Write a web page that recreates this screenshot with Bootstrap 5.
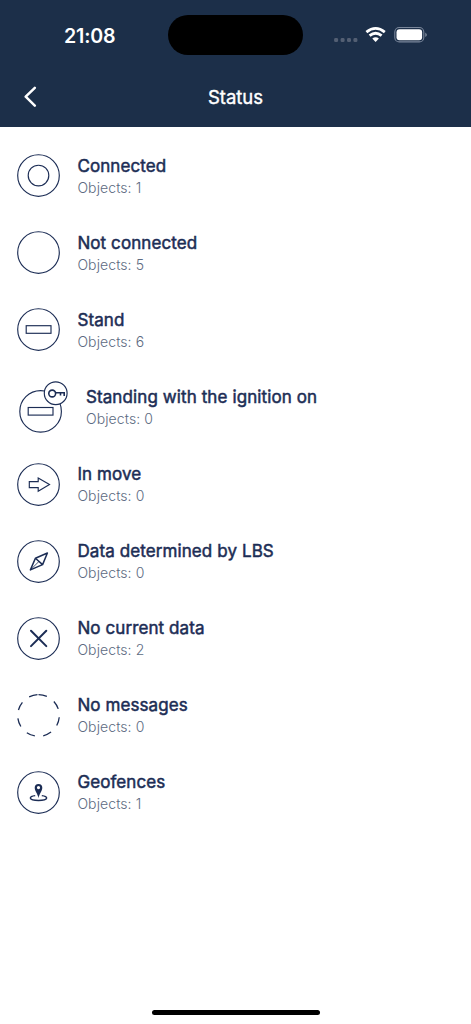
<!DOCTYPE html>
<html lang="en">
<head>
<meta charset="utf-8">
<meta name="viewport" content="width=device-width, initial-scale=1">
<title>Status</title>
<link href="https://cdn.jsdelivr.net/npm/bootstrap@5.3.0/dist/css/bootstrap.min.css" rel="stylesheet">
<style>
body{font-family:Inter,"Liberation Sans",sans-serif;background:#fff;color:#1c2d55;overflow:hidden}
.top-area{background:#1c2f49;height:126.5px}
.status-strip{height:70px}
.clock{width:168.2px;padding-left:64px;font-size:19.6px;font-weight:600;line-height:24px;letter-spacing:-.15px;padding-top:1px}
.island{width:134.4px;height:39.5px;border-radius:20px;background:#000}
.signals{padding-left:31.4px}
.title-bar{height:56px;padding:0 24px;margin-top:-1px}
.title-bar h1{font-size:18.5px;line-height:24px;font-weight:400;-webkit-text-stroke:.4px #fff;margin:0 0 1px}
.side{width:13px}
.list-area{padding-top:10.6px}
.status-row{height:77.1px;padding:0 17.2px;gap:17.2px}
.status-row svg{fill:none;stroke:#1c2d55;stroke-width:1.15}
.name{font-size:17px;line-height:22px;font-weight:400;-webkit-text-stroke:.5px #1c2d55;letter-spacing:.1px}
.count{font-size:14px;line-height:18px;font-weight:300;color:#5d6b82;letter-spacing:.1px;margin-top:2px}
.home-bar{width:168px;height:5.5px;border-radius:3px;background:#000;margin-bottom:9px}
</style>
</head>
<body>
<div class="vh-100 d-flex flex-column">
<header class="top-area text-white flex-shrink-0">
  <div class="status-strip d-flex align-items-center">
    <div class="clock">21:08</div>
    <div class="island"></div>
    <div class="signals d-flex align-items-center">
      <svg width="94" height="20" viewBox="334 25 94 20" fill="#fff">
        <g fill="#535f73"><rect x="334.1" y="38.1" width="4" height="4" rx="1.4"/><rect x="340.6" y="38.1" width="4" height="4" rx="1.4"/><rect x="347" y="38.1" width="4" height="4" rx="1.4"/><rect x="353.4" y="38.1" width="4" height="4" rx="1.4"/></g>
        <g fill="none" stroke="#fff" stroke-width="2.8"><path d="M366.4 32.1Q375.6 24.6 384.8 32.1"/><path d="M369.6 35.7Q375.6 30.9 381.6 35.7"/></g>
        <path d="M372.3 38.6Q375.6 36 378.9 38.6L375.6 42Z"/>
        <rect x="394.8" y="27.5" width="29" height="14.4" rx="4.5" fill="none" stroke="#79869a" stroke-width="1.1"/>
        <rect x="396.5" y="29.2" width="25.6" height="11" rx="3"/>
        <path d="M425.3 32.4Q428.3 34.7 425.3 37Z" fill="#8590a1"/>
      </svg>
    </div>
  </div>
  <nav class="title-bar d-flex align-items-center justify-content-between">
    <svg class="side" width="13" height="22" viewBox="0 0 13 22" fill="none" stroke="#fff" stroke-width="2.5" stroke-linecap="round" stroke-linejoin="round"><path d="M10.8 1.8L1.7 10.7L10.8 19.6"/></svg>
    <h1>Status</h1>
    <span class="side"></span>
  </nav>
</header>
<main class="list-area flex-grow-1">
  <div class="status-row d-flex align-items-center">
    <svg width="43" height="43" viewBox="0 0 43 43"><circle cx="21.5" cy="21.5" r="20.8"/><circle cx="21.5" cy="21.5" r="10.3"/></svg>
    <div><div class="name">Connected</div><div class="count">Objects: 1</div></div>
  </div>
  <div class="status-row d-flex align-items-center">
    <svg width="43" height="43" viewBox="0 0 43 43"><circle cx="21.5" cy="21.5" r="20.8"/></svg>
    <div><div class="name">Not connected</div><div class="count">Objects: 5</div></div>
  </div>
  <div class="status-row d-flex align-items-center">
    <svg width="43" height="43" viewBox="0 0 43 43"><circle cx="21.5" cy="21.5" r="20.8"/><rect x="9.2" y="17.7" width="24.8" height="7.6"/></svg>
    <div><div class="name">Stand</div><div class="count">Objects: 6</div></div>
  </div>
  <div class="status-row d-flex align-items-center">
    <svg width="51.6" height="54" viewBox="0 0 51.6 54"><circle cx="23.6" cy="31.4" r="20.8"/><rect x="11.2" y="27.5" width="24.8" height="7.6"/><circle cx="38.7" cy="13.2" r="11.4" fill="#fff"/><g stroke-width="1.6"><circle cx="35.2" cy="13.5" r="3.4"/><path d="M38.6 12.8H47.2V15.9M43.5 12.8V15.4"/></g></svg>
    <div><div class="name">Standing with the ignition on</div><div class="count">Objects: 0</div></div>
  </div>
  <div class="status-row d-flex align-items-center">
    <svg width="43" height="43" viewBox="0 0 43 43"><circle cx="21.5" cy="21.5" r="20.8"/><path d="M12.3 18.6H21.2V14.9L32.5 21.6L21.2 28.3V24.6H12.3Z"/></svg>
    <div><div class="name">In move</div><div class="count">Objects: 0</div></div>
  </div>
  <div class="status-row d-flex align-items-center">
    <svg width="43" height="43" viewBox="0 0 43 43"><circle cx="21.5" cy="21.5" r="20.8"/><path stroke-width="1.5" stroke-linejoin="round" d="M30.4 13L25.6 24.6L13.4 29.9L18.4 18.2ZM18.4 18.2L25.6 24.6"/><path stroke-width=".8" d="M13.4 29.9L22 21.4"/></svg>
    <div><div class="name">Data determined by LBS</div><div class="count">Objects: 0</div></div>
  </div>
  <div class="status-row d-flex align-items-center">
    <svg width="43" height="43" viewBox="0 0 43 43"><circle cx="21.5" cy="21.5" r="20.8"/><path stroke-width="2" stroke-linecap="round" d="M14 13.8L29.3 29.1M29.3 13.8L14 29.1"/></svg>
    <div><div class="name">No current data</div><div class="count">Objects: 2</div></div>
  </div>
  <div class="status-row d-flex align-items-center">
    <svg width="43" height="43" viewBox="0 0 43 43"><circle cx="21.5" cy="21.5" r="20.8" pathLength="360" stroke-width="1.3" stroke-dasharray="23.8 23.8" transform="rotate(-90 21.5 21.5)"/></svg>
    <div><div class="name">No messages</div><div class="count">Objects: 0</div></div>
  </div>
  <div class="status-row d-flex align-items-center">
    <svg width="43" height="43" viewBox="0 0 43 43"><circle cx="21.5" cy="21.5" r="20.8"/><path stroke-width="1.4" d="M18.2 24.6C11.3 25.3 11.2 29.5 21.5 29.5C31.8 29.5 31.7 25.3 24.8 24.6"/><path fill="#1c2d55" stroke="none" fill-rule="evenodd" d="M21.5 27.3C21 23 17.7 20.3 17.7 16.7A3.8 3.8 0 0 1 25.3 16.7C25.3 20.3 22 23 21.5 27.3ZM21.5 15A1.6 1.6 0 1 0 21.5 18.2A1.6 1.6 0 1 0 21.5 15Z"/></svg>
    <div><div class="name">Geofences</div><div class="count">Objects: 1</div></div>
  </div>
</main>
<footer class="d-flex justify-content-center"><div class="home-bar"></div></footer>
</div>
<script src="https://cdn.jsdelivr.net/npm/bootstrap@5.3.0/dist/js/bootstrap.bundle.min.js"></script>
</body>
</html>
